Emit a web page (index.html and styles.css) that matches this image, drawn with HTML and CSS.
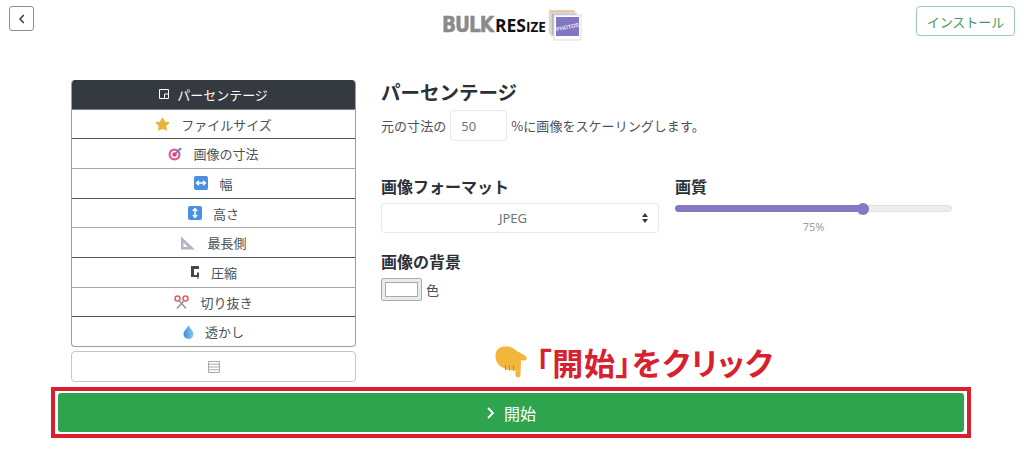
FILE: index.html
```html
<!DOCTYPE html>
<html lang="ja">
<head>
<meta charset="utf-8">
<title>Bulk Resize</title>
<link rel="stylesheet" href="styles.css">
</head>
<body>
<header class="top">
  <button class="back" aria-label="戻る"><svg width="8" height="10" viewBox="0 0 8 10"><path d="M5.8 1 2 5l3.8 4" fill="none" stroke="#343a40" stroke-width="1.5"/></svg></button>
  <div class="logo">
    <span class="logo-bulk">BULK</span><span class="logo-resize">RES<small>IZE</small></span>
    <svg class="logo-pic" width="34" height="32" viewBox="0 0 34 32"><rect x="1" y="1" width="26" height="24" fill="#e2bf8c" stroke="#eee"/><rect x="3" y="4" width="26" height="23" fill="#a9b5d8" stroke="#eee"/><rect x="6" y="6" width="27" height="25" fill="#fff" stroke="#ddd"/><rect x="8" y="8" width="23" height="19" fill="#8377c4"/><text x="19.5" y="20" transform="rotate(-12 19.5 18)" class="logo-photos">PHOTOS</text></svg>
  </div>
  <button class="install">インストール</button>
</header>
<main class="main">
  <nav class="side">
    <ul class="menu">
      <li class="item active"><svg width="10" height="10" viewBox="0 0 10 10"><path d="M.5.5h9v9h-9zM9.5 5h-4v4.5" fill="none" stroke="#fff"/></svg>パーセンテージ</li>
      <li class="item"><svg width="15" height="14" viewBox="0 0 16 15"><path d="m8 1.500 2.200 4 4.300.7-3.200 3.300.7 4.300L8 11.900l-4 1.900.7-4.300L1.500 6.200l4.300-.7z" fill="#e8b53c" stroke="#e8b53c" stroke-width="1.500" stroke-linejoin="round"/></svg>ファイルサイズ</li>
      <li class="item"><svg width="14" height="14" viewBox="0 0 14 14"><circle cx="6.5" cy="7.5" r="6" fill="#e2558f"/><circle cx="6.5" cy="7.5" r="3.8" fill="#fff"/><circle cx="6.5" cy="7.5" r="2.2" fill="#d9467f"/><path d="m7 7 5-5" stroke="#4a7fc0" stroke-width="1.5"/><path d="m10.5 1 3 0-.5 3z" fill="#4a90d9"/></svg>画像の寸法</li>
      <li class="item"><svg width="14" height="14" viewBox="0 0 14 14"><rect width="14" height="14" rx="2" fill="#4a90e2"/><path d="M2.5 7h9M5 4.800 2.500 7 5 9.200M9 4.800 11.500 7 9 9.200" stroke="#fff" stroke-width="1.4" fill="none"/></svg>幅</li>
      <li class="item"><svg width="14" height="14" viewBox="0 0 14 14"><rect width="14" height="14" rx="2" fill="#4a90e2"/><path d="M7 2.500v9M4.800 5 7 2.500 9.200 5M4.800 9 7 11.500 9.200 9" stroke="#fff" stroke-width="1.4" fill="none"/></svg>高さ</li>
      <li class="item"><svg width="16" height="14" viewBox="0 0 16 14"><path d="M1 .5v13h14zM3.500 6.500v4.500h4.500z" fill="#b5b3c6" fill-rule="evenodd"/></svg>最長側</li>
      <li class="item"><svg width="10" height="14" viewBox="0 0 10 14"><path d="M1 1h8v3H4v6h3V7.500h2V12H1z" fill="#4a4358"/><path d="M7 12h1.500v2H7z" fill="#8a86a0"/></svg>圧縮</li>
      <li class="item"><svg width="15" height="14" viewBox="0 0 15 14"><circle cx="3.500" cy="3.500" r="2.500" fill="none" stroke="#e0605e" stroke-width="1.500"/><circle cx="11.500" cy="3.500" r="2.500" fill="none" stroke="#e0605e" stroke-width="1.500"/><path d="M5 5.500 12 13.500M10 5.500 3 13.500" stroke="#8c96a8" stroke-width="1.500"/></svg>切り抜き</li>
      <li class="item"><svg width="11" height="14" viewBox="0 0 11 14"><defs><linearGradient id="drop" x1="0" x2="1"><stop offset="0" stop-color="#3d8fe0"/><stop offset="1" stop-color="#8fc3f2"/></linearGradient></defs><path d="M5.500 .5C7 3.500 10.500 6 10.500 9a5 5 0 0 1-10 0C.5 6 4 3.500 5.500 .5z" fill="url(#drop)"/></svg>透かし</li>
    </ul>
    <button class="more" aria-label="その他"><svg width="12" height="12" viewBox="0 0 12 12"><path d="M.5.5h11v11H.5zM.5 3.200h11M.5 6h11M.5 8.800h11" fill="none" stroke="#aaa"/></svg></button>
  </nav>
  <section class="panel">
    <h1 class="title">パーセンテージ</h1>
    <p class="scale">元の寸法の<input class="num" type="text" value="50">%に画像をスケーリングします。</p>
    <div class="cols">
      <div class="col-format">
        <h2 class="label">画像フォーマット</h2>
        <div class="select">JPEG<svg class="updown" width="6" height="10" viewBox="0 0 6 10"><path d="M3 0 6 4H0zM3 10 0 6h6z" fill="#343a40"/></svg></div>
        <h2 class="label label-bg">画像の背景</h2>
        <div class="color"><span class="swatch"><span class="swatch-in"></span></span>色</div>
      </div>
      <div class="col-quality">
        <h2 class="label">画質</h2>
        <div class="slider"><div class="fill" style="width:68%"></div><span class="thumb"></span></div>
        <div class="pct">75%</div>
      </div>
    </div>
  </section>
  <div class="note"><svg width="36" height="36" viewBox="0 0 36 36"><path d="M1.500 12C1.500 6 5 3 10 2.500c4-.4 7 .2 9.500 2l4 3c3 1.500 6 2.800 8 4.500 2.500 2.200 1 5-1.800 4.500l-2.700-.5-.5 15c-.2 3.300-4.800 3.300-5 0l-.3-5c-1 1-2.700 1-3.400-.3-1 1.200-2.800 1-3.500-.4-1 1-2.800.7-3.300-.8C6 23 1.500 19 1.500 12z" fill="#f2b63c"/><path d="M11.500 21v5M15.500 21.500v5M19.500 21.500v5" stroke="#c98a1e" stroke-width="1"/></svg><span class="note-text">「開始」をクリック</span></div>
</main>
<div class="frame"><button class="start"><svg width="9" height="12" viewBox="0 0 9 12"><path d="m2 1 5 5-5 5" fill="none" stroke="#fff" stroke-width="1.800"/></svg>開始</button></div>
</body>
</html>
```
FILE: styles.css
```css
* { box-sizing: border-box; }
html, body { margin: 0; padding: 0; background: #fff; }
body {
  width: 1024px;
  height: 453px;
  overflow: hidden;
  font-family: "Noto Sans CJK JP", "Noto Sans", sans-serif;
  color: #343a40;
  font-size: 13px;
}
button { font-family: inherit; cursor: pointer; }
.top {
  display: flex;
  justify-content: space-between;
  align-items: flex-start;
  height: 80px;
  padding: 6px 9px;
  position: relative;
}
.back {
  width: 25px;
  height: 25px;
  padding: 0;
  display: flex;
  align-items: center;
  justify-content: center;
  background: #fff;
  border: 1px solid #868e96;
  border-radius: 3px;
}
.install {
  width: 99px;
  height: 30px;
  padding: 0;
  background: #fff;
  border: 1px solid #9ccbaa;
  border-radius: 4px;
  color: #3c9c5c;
  font-size: 13px;
}
.logo {
  display: flex;
  align-items: center;
  position: absolute;
  left: 442px;
  top: 9px;
  height: 32px;
}
.logo-bulk {
  font-family: "DejaVu Sans", sans-serif;
  font-weight: 700;
  font-size: 21px;
  color: #8a8a8a;
  letter-spacing: -1.2px;
  -webkit-text-stroke: .5px #8a8a8a;
  transform: scaleX(.88);
  transform-origin: left center;
  width: 53px;
}
.logo-resize {
  font-family: "Open Sans", sans-serif;
  font-weight: 700;
  font-size: 17.500px;
  color: #111;
  width: 53px;
  white-space: nowrap;
}
.logo-resize small { font-size: 13.500px; }
.logo-photos { font: 700 5.500px "Liberation Sans", sans-serif; fill: #e4dff5; text-anchor: middle; }
.main {
  position: relative;
  display: flex;
  padding-left: 71px;
  height: 307px;
}
.side { width: 285px; flex: none; }
.menu {
  list-style: none;
  margin: 0;
  padding: 0;
  height: 267px;
  display: flex;
  flex-direction: column;
  border: 1px solid #9a9fa4;
  border-top: 0;
  border-radius: 4px;
  overflow: hidden;
}
.item {
  flex: 1;
  display: flex;
  align-items: center;
  justify-content: center;
  gap: 11px;
  font-size: 13px;
  color: #4b5157;
  border-bottom: 1px solid #a5a9ae;
}
.item:nth-child(even) { border-bottom-color: #4d5359; }
.item:last-child { border-bottom: 0; }
.item.active { background: #343a40; color: #fff; gap: 8px; border-bottom-color: #7d838a; }
.more {
  display: flex;
  align-items: center;
  justify-content: center;
  width: 285px;
  height: 31px;
  margin-top: 4px;
  padding: 0;
  background: #fff;
  border: 1px solid #c3c6c9;
  border-radius: 4px;
}
.panel { width: 572px; margin-left: 25px; }
.title {
  margin: 0;
  font-size: 19.500px;
  line-height: 24px;
  font-weight: 700;
  color: #2b3035;
}
.scale {
  display: flex;
  align-items: center;
  gap: 4px;
  margin: 6px 0 0;
  height: 31px;
  font-size: 13px;
  color: #4b5157;
  letter-spacing: .05px;
}
.num {
  width: 57px;
  height: 31px;
  padding: 0 10px;
  border: 1px solid #e6e8ea;
  border-radius: 4px;
  font: 13px "Noto Sans", sans-serif;
  color: #6c757d;
  margin-left: 0;
}
.cols { display: flex; gap: 16px; margin-top: 34px; }
.col-format { width: 278px; flex: none; }
.col-quality { width: 277px; flex: none; }
.label {
  margin: 0;
  font-size: 16px;
  line-height: 22px;
  font-weight: 700;
  color: #2b3035;
}
.select {
  position: relative;
  height: 30px;
  margin-top: 6px;
  padding-right: 14px;
  display: flex;
  align-items: center;
  justify-content: center;
  border: 1px solid #e6e8ea;
  border-radius: 4px;
  font: 13px "Noto Sans", sans-serif;
  color: #6c757d;
}
.updown { position: absolute; right: 10px; top: 9px; }
.label-bg { margin-top: 17px; }
.color { display: flex; align-items: center; gap: 4px; height: 24px; margin-top: 5px; font-size: 13px; color: #4b5157; }
.swatch {
  width: 41px;
  height: 23px;
  display: flex;
  padding: 3px;
  background: #e9ecef;
  border: 1px solid #a8acb0;
  border-radius: 2px;
}
.swatch-in { flex: 1; background: #fff; border: 1px solid #a8acb0; }
.slider {
  position: relative;
  height: 7px;
  margin-top: 8px;
  background: #eceded;
  border: 1px solid #e0e1e2;
  border-radius: 4px;
}
.fill { height: 7px; margin: -1px; background: #8878c3; border-radius: 4px; }
.thumb {
  position: absolute;
  left: 181px;
  top: -3.500px;
  width: 12px;
  height: 12px;
  border-radius: 50%;
  background: #8878c3;
}
.pct { margin-top: 7px; text-align: center; font: 11px "Noto Sans", sans-serif; color: #9a9ea3; }
.note {
  position: absolute;
  left: 494px;
  top: 263px;
  display: flex;
  align-items: center;
  height: 38px;
}
.note-text {
  font-size: 31px;
  line-height: 38px;
  font-weight: 700;
  color: #d9202f;
  font-feature-settings: "palt";
  letter-spacing: .7px;
  margin-left: 6px;
}
.frame {
  width: 920px;
  height: 51px;
  margin-left: 51px;
  padding: 2px 3px;
  border: 4px solid #dc1f2e;
}
.start {
  width: 100%;
  height: 100%;
  display: flex;
  align-items: center;
  justify-content: center;
  gap: 9px;
  background: #2fa44f;
  border: 0;
  border-radius: 3px;
  color: #fff;
  font-size: 16px;
}
```
